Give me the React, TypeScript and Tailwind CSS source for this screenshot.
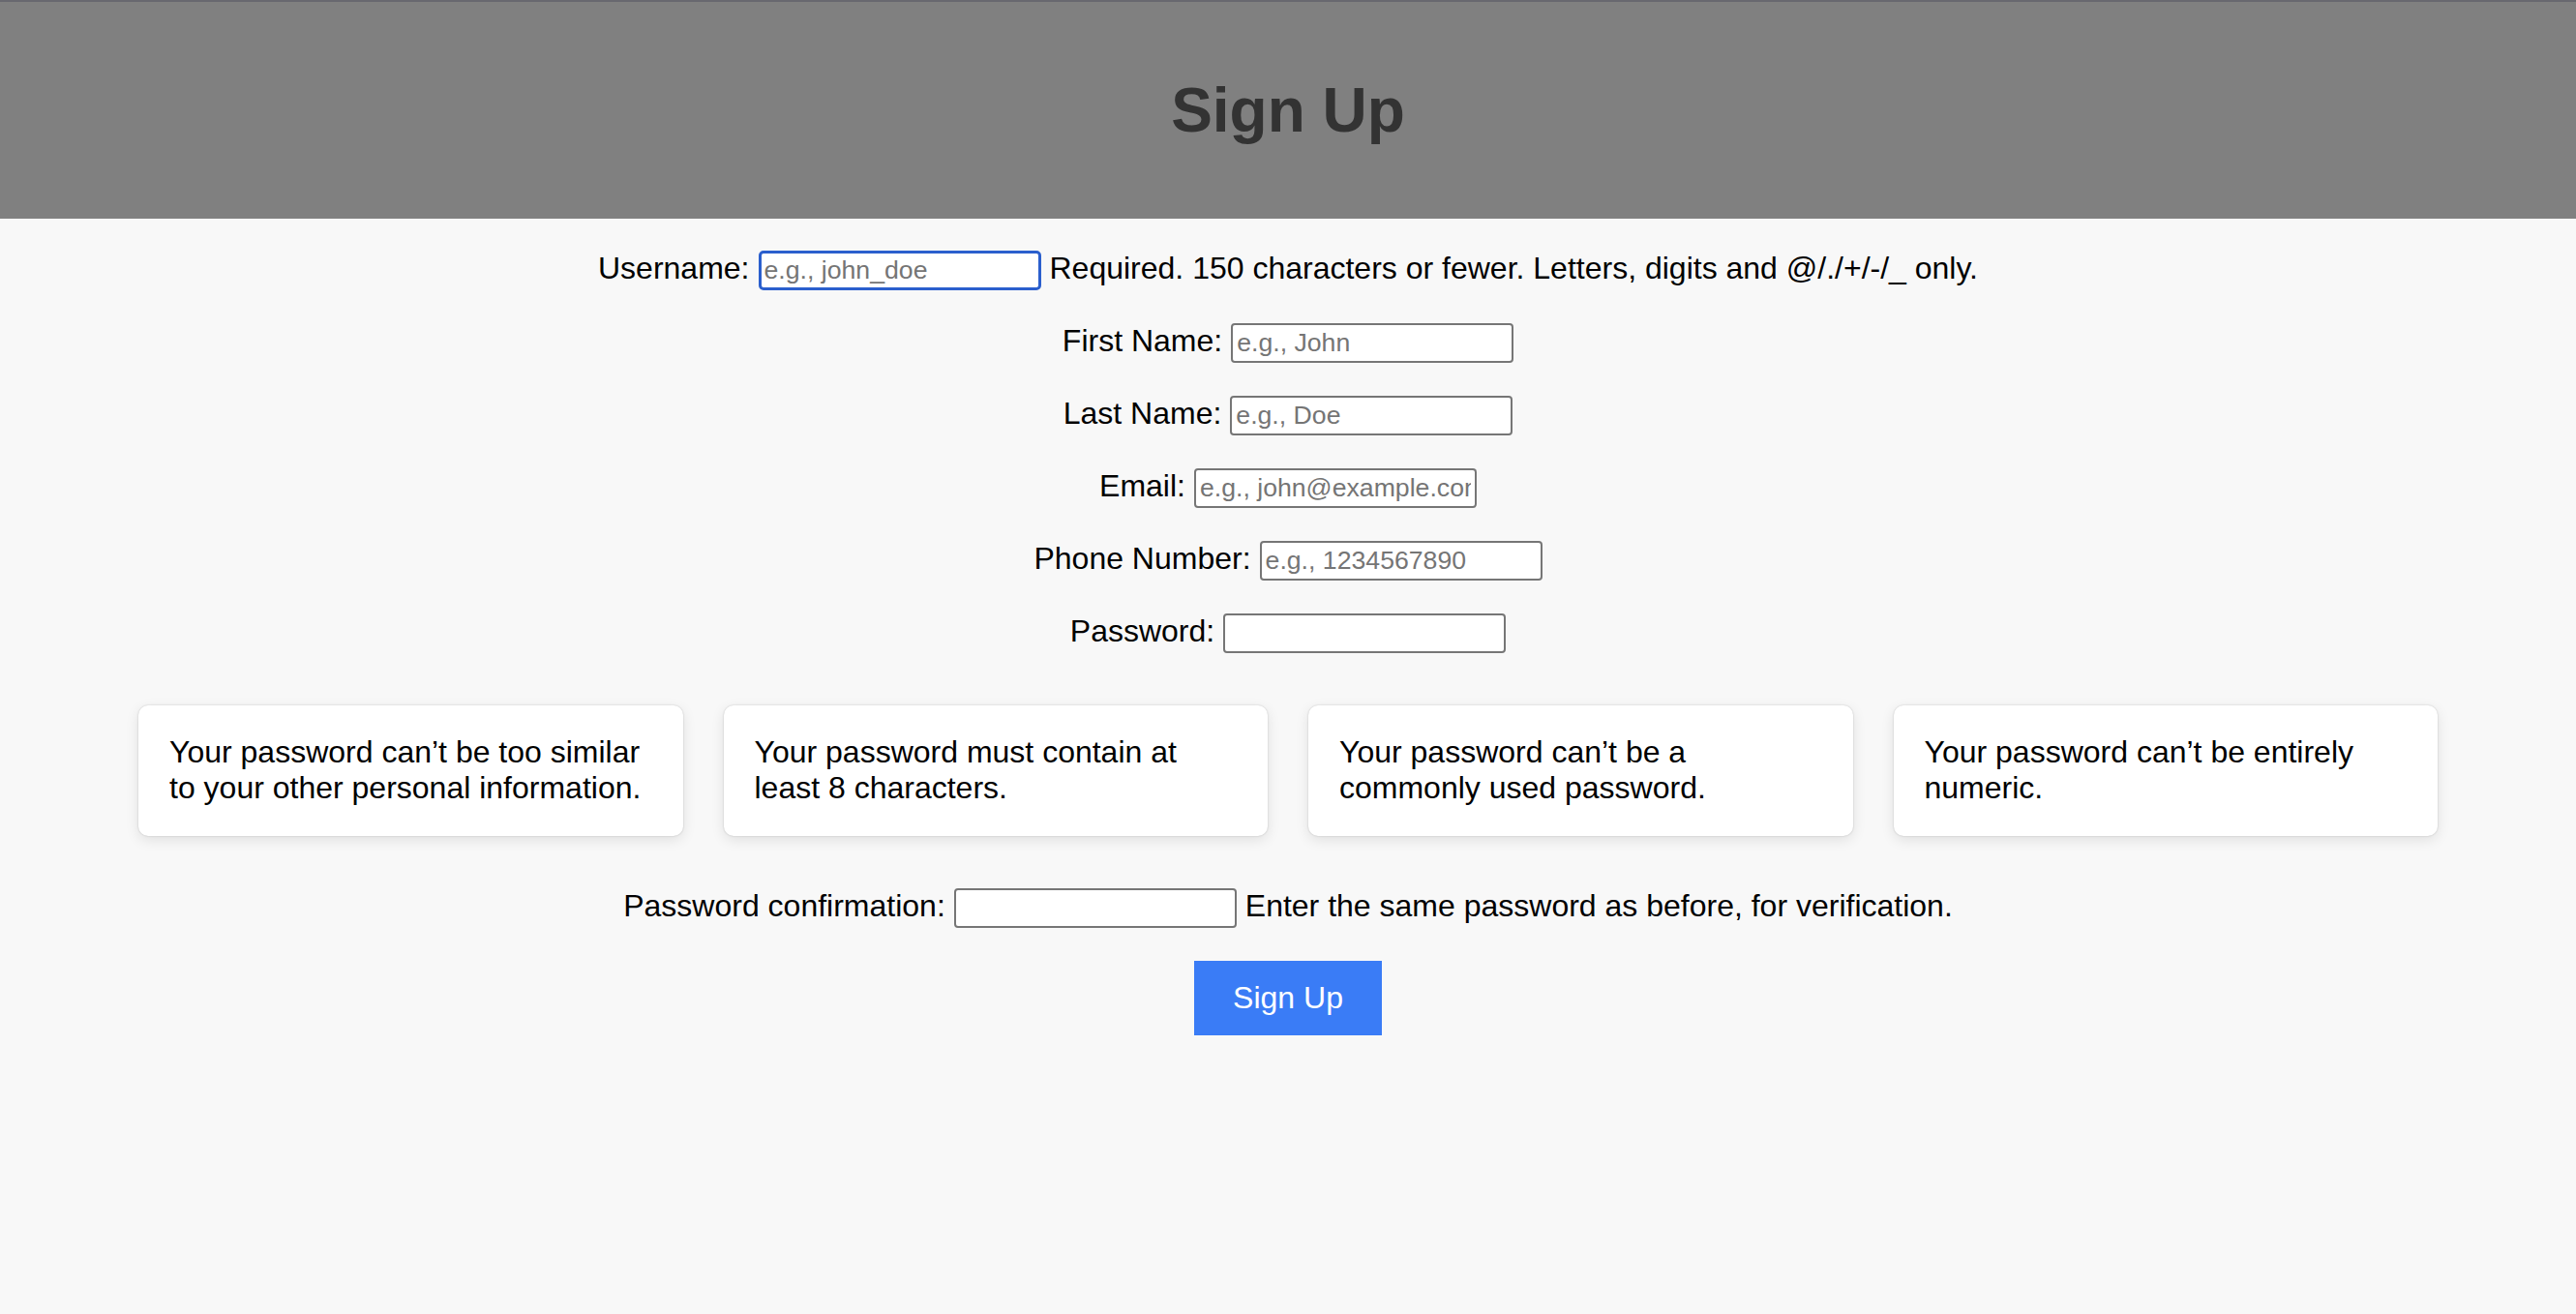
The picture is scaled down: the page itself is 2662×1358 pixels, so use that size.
import React from 'react';

const font = { fontFamily: '"Liberation Sans", Arial, Helvetica, sans-serif' };

const inputClass =
  'h-[41px] w-[292px] shrink-0 rounded-[4px] border-2 border-[#767676] bg-white px-[4px] text-[26.67px] text-black placeholder:text-[#757575] outline-none';

const Field = ({
  label,
  placeholder,
  type = 'text',
  help,
  focused = false,
}: {
  label: string;
  placeholder?: string;
  type?: string;
  help?: string;
  focused?: boolean;
}) => (
  <div className="flex h-[41px] items-baseline justify-center gap-[9px] whitespace-nowrap">
    <label className="leading-[37px]">{label}</label>
    <input
      type={type}
      placeholder={placeholder}
      className={
        focused
          ? 'h-[41px] w-[292px] shrink-0 rounded-[5px] border-[3px] border-[#2b5fcd] bg-white px-[3px] text-[26.67px] text-black placeholder:text-[#757575] outline-none'
          : inputClass
      }
    />
    {help && <span className="leading-[37px]">{help}</span>}
  </div>
);

const rules = [
  'Your password can’t be too similar to your other personal information.',
  'Your password must contain at least 8 characters.',
  'Your password can’t be a commonly used password.',
  'Your password can’t be entirely numeric.',
];

export default function App() {
  return (
    <div className="min-h-screen bg-[#f8f8f8] text-[32px] text-black" style={font}>
      {/* Header */}
      <header className="flex h-[226px] items-center justify-center border-t-2 border-[#68686f] bg-[#808080]">
        <h1 className="text-[64px] font-bold leading-none text-[#333333]">Sign Up</h1>
      </header>

      <form className="flex flex-col gap-[34px] pt-[33px]" onSubmit={(e) => e.preventDefault()}>
        <Field
          label="Username:"
          placeholder="e.g., john_doe"
          help="Required. 150 characters or fewer. Letters, digits and @/./+/-/_ only."
          focused
        />
        <Field label="First Name:" placeholder="e.g., John" />
        <Field label="Last Name:" placeholder="e.g., Doe" />
        <Field label="Email:" placeholder="e.g., john@example.com" type="email" />
        <Field label="Phone Number:" placeholder="e.g., 1234567890" />
        <Field label="Password:" type="password" />

        {/* Password rules */}
        <ul className="mt-[20px] grid grid-cols-4 gap-[42px] px-[143px]">
          {rules.map((rule) => (
            <li
              key={rule}
              className="h-[135px] rounded-[10px] bg-white px-[32px] py-[30px] leading-[37px] shadow-[0_0_2px_rgba(0,0,0,0.2),0_4px_14px_rgba(0,0,0,0.1)]"
            >
              {rule}
            </li>
          ))}
        </ul>

        <div className="mt-[20px]">
          <Field
            label="Password confirmation:"
            type="password"
            help="Enter the same password as before, for verification."
          />
        </div>

        <div className="flex justify-center">
          <button
            type="submit"
            className="h-[77px] bg-[#3a7cf6] px-[40px] text-[32px] leading-[37px] text-white"
          >
            Sign Up
          </button>
        </div>
      </form>
    </div>
  );
}
